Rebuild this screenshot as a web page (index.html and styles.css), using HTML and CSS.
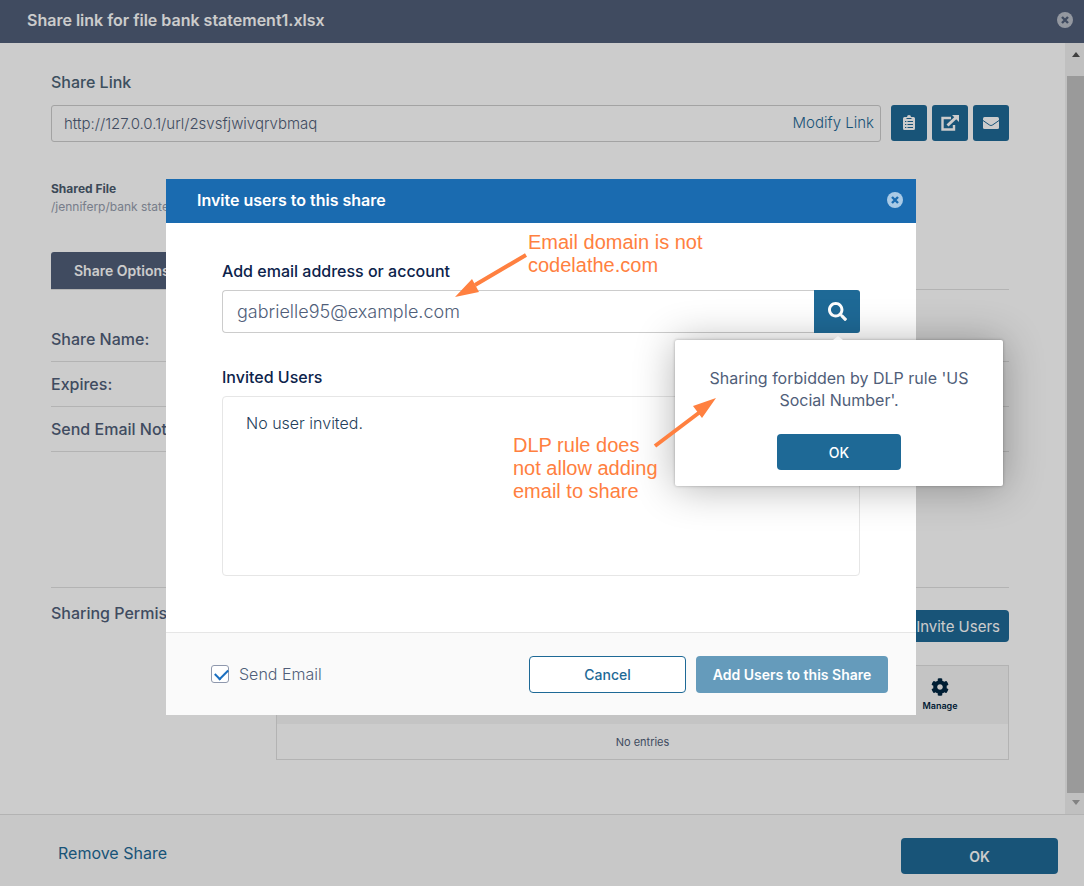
FILE: index.html
```
<!DOCTYPE html>
<html lang="en">
	<head>
		<meta charset="utf-8" />
		<meta name="viewport" content="width=device-width, initial-scale=1" />
		<title>Share link</title>
		<link rel="stylesheet" href="styles.css">
	</head>

	<body>
		<div class="page">
			<header class="page-header">
				<h1 class="title">Share link for file bank statement1.xlsx</h1>
				<button class="close" type="button">
					<svg width="16" height="16" viewBox="0 0 16 16"><circle cx="8" cy="8" r="8" fill="#b9bfc9" /><path d="M5 5l6 6M11 5l-6 6" stroke="#505e79" stroke-width="2.4" /></svg>
				</button>
			</header>

			<div class="page-body">
				<main class="content">
					<label class="heading" for="share-link">Share Link</label>
					<div class="link-row">
						<div class="link-box">
							<input class="link-input" id="share-link" type="text" value="http://127.0.0.1/url/2svsfjwivqrvbmaq" />
							<a class="link modify" href="#">Modify Link</a>
						</div>
						<button class="icon-btn" type="button">
							<svg width="12" height="16" viewBox="0 0 12 16"><path d="M1.5 2H4a2 2 0 0 1 4 0h2.500A1.500 1.500 0 0 1 12 3.500v10a1.500 1.500 0 0 1-1.500 1.500h-9A1.500 1.500 0 0 1 0 13.500v-10A1.500 1.500 0 0 1 1.500 2z" fill="#fff" /><path d="M4.500 6.500h5.500M4.500 9.500h5.500M4.500 12.500h5.500M2 6.500h1.300M2 9.500h1.300M2 12.500h1.300M3.500 3.500h5" stroke="#1e6996" stroke-width="1" /></svg>
						</button>
						<button class="icon-btn" type="button">
							<svg width="18" height="16" viewBox="0 0 18 16"><path d="M10 3H1.500v11.500H13V10" fill="none" stroke="#fff" stroke-width="2.400" /><path d="M6.500 10.500L15 2.500" stroke="#fff" stroke-width="3" /><path d="M11 0h7v7z" fill="#fff" /></svg>
						</button>
						<button class="icon-btn" type="button">
							<svg width="16" height="12" viewBox="0 0 16 12"><rect width="16" height="12" rx="1.500" fill="#fff" /><path d="M0 3.500l6.200 4.300c1.200.9 2.400.9 3.600 0L16 3.500" fill="none" stroke="#1e6996" /></svg>
						</button>
					</div>

					<div class="shared-file">
						<b class="shared-label">Shared File</b>
						<span>/jenniferp/bank statement1.xlsx</span>
					</div>

					<nav class="tabs">
						<button class="tab" type="button">Share Options</button>
					</nav>

					<div class="options">
						<div class="option">Share Name:</div>
						<div class="option">Expires:</div>
						<div class="option">Send Email Notifications:</div>
					</div>

					<section class="permissions">
						<h2 class="heading">Sharing Permissions</h2>
						<div class="permissions-list">
							<button class="btn invite" type="button">Invite Users</button>
							<table class="users">
								<thead>
									<tr>
										<td></td>
										<th class="manage">
											<svg width="18" height="18" viewBox="0 0 512 512"><path fill="#002642" d="M487.400 315.700l-42.600-24.600c4.300-23.200 4.300-47 0-70.200l42.600-24.600c4.900-2.800 7.100-8.600 5.500-14-11.100-35.600-30-67.800-54.700-94.600-3.800-4.100-10-5.100-14.800-2.300L380.800 110c-17.900-15.400-38.500-27.300-60.800-35.100V25.800c0-5.600-3.900-10.500-9.400-11.700-36.700-8.200-74.300-7.800-109.200 0-5.500 1.200-9.400 6.100-9.400 11.700V75c-22.200 7.900-42.800 19.800-60.800 35.100L88.700 85.500c-4.900-2.800-11-1.900-14.800 2.300-24.700 26.700-43.600 58.900-54.700 94.600-1.700 5.400.6 11.200 5.500 14L67.300 221c-4.300 23.200-4.300 47 0 70.200l-42.600 24.600c-4.900 2.800-7.100 8.600-5.500 14 11.100 35.600 30 67.800 54.700 94.600 3.800 4.100 10 5.100 14.800 2.300l42.600-24.600c17.900 15.400 38.500 27.300 60.800 35.100v49.200c0 5.600 3.900 10.500 9.400 11.700 36.700 8.200 74.300 7.800 109.200 0 5.500-1.200 9.400-6.100 9.400-11.700v-49.200c22.200-7.900 42.800-19.800 60.800-35.100l42.600 24.600c4.900 2.800 11 1.900 14.800-2.300 24.700-26.700 43.600-58.900 54.700-94.600 1.500-5.500-.7-11.300-5.600-14.100zM256 336c-44.100 0-80-35.900-80-80s35.900-80 80-80 80 35.900 80 80-35.900 80-80 80z" /></svg>
											Manage
										</th>
									</tr>
								</thead>
								<tbody>
									<tr>
										<td class="empty" colspan="2">No entries</td>
									</tr>
								</tbody>
							</table>
						</div>
					</section>
				</main>

				<div class="scrollbar">
					<svg class="scroll-arrow" width="8" height="5" viewBox="0 0 8 5"><path d="M4 0l4 5H0z" fill="#505050" /></svg>
					<div class="thumb"></div>
					<svg class="scroll-arrow" width="8" height="5" viewBox="0 0 8 5"><path d="M4 5l4-5H0z" fill="#a3a3a3" /></svg>
				</div>
			</div>

			<footer class="page-footer">
				<a class="link remove" href="#">Remove Share</a>
				<button class="btn wide" type="button">OK</button>
			</footer>
		</div>

		<!-- invite dialog -->
		<div class="overlay">
			<div class="modal" role="dialog">
				<header class="modal-header">
					<h2 class="title">Invite users to this share</h2>
					<button class="close" type="button">
						<svg width="16" height="16" viewBox="0 0 16 16"><circle cx="8" cy="8" r="8" fill="#a9cae6" /><path d="M5 5l6 6M11 5l-6 6" stroke="#1a6bb0" stroke-width="2.4" /></svg>
					</button>
				</header>

				<div class="modal-body">
					<label class="modal-label" for="email">Add email address or account</label>
					<div class="search">
						<input class="search-input" id="email" type="text" value="gabrielle95@example.com" />
						<button class="search-btn" type="button">
							<svg width="19" height="19" viewBox="0 0 512 512"><path fill="#fff" d="M505 442.700L405.300 343c-4.500-4.500-10.600-7-17-7H372c27.600-35.300 44-79.700 44-128C416 93.100 322.900 0 208 0S0 93.100 0 208s93.100 208 208 208c48.300 0 92.700-16.400 128-44v16.300c0 6.400 2.500 12.500 7 17l99.700 99.700c9.400 9.400 24.600 9.400 33.900 0l28.300-28.300c9.400-9.400 9.400-24.600.1-34zM208 336c-70.700 0-128-57.200-128-128 0-70.700 57.200-128 128-128 70.700 0 128 57.200 128 128 0 70.700-57.200 128-128 128z" /></svg>
						</button>
						<div class="popover">
							<p class="message">Sharing forbidden by DLP rule 'US Social Number'.</p>
							<button class="btn popover-ok" type="button">OK</button>
						</div>
					</div>

					<h3 class="modal-label">Invited Users</h3>
					<div class="invited">No user invited.</div>
				</div>

				<footer class="modal-footer">
					<input class="check" id="send-email" type="checkbox" checked />
					<label class="check-label" for="send-email">Send Email</label>
					<button class="btn wide outline" type="button">Cancel</button>
					<button class="btn add" type="button">Add Users to this Share</button>
				</footer>

				<!-- notes drawn on top of the dialog -->
				<p class="note note-email">Email domain is not<br />codelathe.com</p>
				<p class="note note-rule">DLP rule does<br />not allow adding<br />email to share</p>
				<svg class="arrows" width="750" height="536" viewBox="0 0 750 536">
					<g fill="#ff8040" stroke="#ff8040">
						<path d="M360 76l-51 30M489 267l45-34" stroke-width="4" />
						<path d="M289 118l17-18 7 13zM550 219l-23 8 9 12z" stroke="none" />
					</g>
				</svg>
			</div>
		</div>
	</body>
</html>
```

FILE: styles.css
```
* {
	box-sizing: border-box;
}

body {
	margin: 0;
	background: #fff;
	color: #505e79;
	font-family: Inter, "Liberation Sans", sans-serif;
	font-size: 16px;
	line-height: 20px;
}

h1, h2, h3, p {
	margin: 0;
}

button, input {
	font-family: inherit;
	color: inherit;
}

svg {
	display: block;
}

/* share page */
.page {
	display: flex;
	flex-direction: column;
	min-height: 100vh;
}

.page-header {
	display: flex;
	align-items: center;
	justify-content: space-between;
	height: 43px;
	padding: 0 11px 3px 27px;
	background: #505e79;
}

.title {
	color: #fff;
	font-size: 16px;
	font-weight: 600;
}

.close {
	padding: 0;
	border: 0;
	background: none;
}

.page-body {
	display: flex;
	flex: 1;
}

.content {
	flex: 1;
	padding: 29px 56px 54px 51px;
}

.heading {
	display: block;
	color: #4c6376;
	font-size: 16px;
	font-weight: 500;
}

.link-row {
	display: flex;
	gap: 5px;
	margin-top: 13px;
}

.link-box {
	display: flex;
	flex: 1;
	align-items: center;
	height: 37px;
	margin-right: 5px;
	padding: 0 6px 1px 12px;
	border: 1px solid #ccc;
	border-radius: 3px;
}

.link-input {
	flex: 1;
	padding: 0;
	border: 0;
	background: none;
	font-size: 15px;
	font-weight: 300;
}

.link {
	color: #1e6996;
	text-decoration: none;
}

.modify {
	font-size: 15px;
	font-weight: 300;
}

.icon-btn {
	display: flex;
	align-items: center;
	justify-content: center;
	width: 36px;
	height: 36px;
	padding: 0;
	border: 0;
	border-radius: 3px;
	background: #1e6996;
}

.shared-file {
	display: flex;
	flex-direction: column;
	margin-top: 38px;
	color: #959dad;
	font-size: 12px;
	line-height: 18px;
}

.shared-label {
	color: #4c5c6e;
	font-weight: 700;
}

.tabs {
	display: flex;
	margin-top: 36px;
	border-bottom: 1px solid #e0e0e0;
}

.tab {
	height: 37px;
	padding: 0 23px;
	border: 0;
	border-radius: 3px 3px 0 0;
	background: #505e79;
	color: #fff;
	font-size: 14px;
	font-weight: 600;
}

.options {
	min-height: 297px;
	padding-top: 27px;
	font-weight: 500;
}

.option {
	height: 45px;
	padding: 12px 0;
	border-bottom: 1px solid #e0e0e0;
}

.permissions {
	display: grid;
	grid-template-columns: 225px 1fr;
	padding-top: 15px;
	border-top: 1px solid #e0e0e0;
}

.permissions .heading {
	color: #505e79;
}

.permissions-list {
	display: flex;
	flex-direction: column;
	gap: 23px;
	padding-top: 7px;
}

.btn {
	height: 36px;
	border: 0;
	border-radius: 4px;
	background: #1e6996;
	color: #fff;
	font-size: 14px;
	font-weight: 500;
}

.wide {
	width: 157px;
}

.invite {
	align-self: flex-end;
	height: 32px;
	padding: 0 9px;
	font-size: 15px;
	font-weight: 400;
}

.users {
	width: 100%;
	border: 1px solid #e0e0e0;
	border-spacing: 0;
	font-size: 11px;
}

.users thead {
	height: 58px;
	background: #f5f5f5;
}

.manage {
	width: 136px;
	padding: 3px 0 0;
	color: #002642;
	font-size: 9px;
	font-weight: 600;
}

.manage svg {
	margin: 0 auto;
}

.empty {
	height: 35px;
	padding: 0;
	text-align: center;
}

.scrollbar {
	display: flex;
	flex-direction: column;
	align-items: center;
	justify-content: space-between;
	width: 19px;
	padding: 9px 0;
	background: #f1f1f1;
}

.scroll-arrow {
	margin-left: 2px;
}

.thumb {
	flex: 1;
	align-self: stretch;
	margin: 19px 0 7px 2px;
	background: #c1c1c1;
}

.page-footer {
	display: flex;
	align-items: center;
	justify-content: space-between;
	height: 72px;
	padding: 11px 26px 0 58px;
	border-top: 1px solid #e0e0e0;
	background: #fafafa;
}

.page-footer .btn {
	font-weight: 600;
}

.remove {
	padding-bottom: 7px;
}

/* dialog */
.overlay {
	position: absolute;
	inset: 0;
	padding: 179px 168px 0 166px;
	background: rgba(0, 0, 0, 0.2);
}

.modal {
	position: relative;
	background: #fff;
}

.modal-header {
	display: flex;
	align-items: center;
	justify-content: space-between;
	height: 44px;
	padding: 0 13px 2px 31px;
	background: #1a6bb0;
}

.modal-body {
	padding: 38px 56px 56px;
}

.modal-label {
	display: block;
	color: #0c234b;
	font-size: 16px;
	font-weight: 500;
}

.search {
	position: relative;
	display: flex;
	margin: 9px 0 34px;
}

.search-input {
	flex: 1;
	height: 43px;
	padding: 0 14px;
	border: 1px solid #ccc;
	border-right: 0;
	border-radius: 4px 0 0 4px;
	font-size: 18px;
	font-weight: 300;
}

.search-btn {
	display: flex;
	align-items: center;
	justify-content: center;
	width: 46px;
	padding: 0;
	border: 0;
	border-radius: 0 3px 3px 0;
	background: #1e6996;
}

.popover {
	position: absolute;
	top: 50px;
	right: -143px;
	width: 328px;
	padding: 27px 32px 16px;
	border-radius: 2px;
	background: #fff;
	box-shadow: 0 0 3px rgba(0, 0, 0, 0.3), 0 2px 40px rgba(0, 0, 0, 0.3);
	text-align: center;
}

.popover::before {
	content: "";
	position: absolute;
	top: -4px;
	left: 158px;
	border: 5px solid transparent;
	border-top: 0;
	border-bottom: 4px solid #f0f0f0;
}

.message {
	line-height: 22px;
}

.popover-ok {
	width: 124px;
	margin-top: 23px;
}

.invited {
	height: 180px;
	margin-top: 9px;
	padding: 16px 23px;
	border: 1px solid #e6e6e6;
	border-radius: 4px;
	color: #24405a;
	font-weight: 300;
}

.modal-footer {
	display: flex;
	align-items: center;
	gap: 10px;
	height: 83px;
	padding: 0 28px 0 45px;
	border-top: 1px solid #e6e6e6;
	background: #fafafa;
}

.check {
	appearance: none;
	width: 18px;
	height: 18px;
	margin: 0;
	border: 1px solid #8f98ad;
	border-radius: 3px;
	background: #fff;
}

/* tick */
.check:checked::before {
	content: "";
	display: block;
	width: 11px;
	height: 6px;
	margin: 3px 0 0 3px;
	border: solid #1a6fc0;
	border-width: 0 0 2px 2px;
	transform: rotate(-45deg);
}

.check-label {
	flex: 1;
	font-weight: 300;
}

.modal-footer .btn {
	height: 37px;
}

.outline {
	border: 1px solid #1e6996;
	background: #fff;
	color: #1e6996;
}

.add {
	width: 192px;
	background: #659bbb;
	font-weight: 600;
}

.note {
	position: absolute;
	color: #ff8040;
	font-family: "Liberation Sans", Arial, sans-serif;
	font-size: 20px;
	line-height: 23px;
}

.note-email {
	top: 52px;
	left: 362px;
}

.note-rule {
	top: 255px;
	left: 347px;
}

.arrows {
	position: absolute;
	top: 0;
	left: 0;
	pointer-events: none;
}
```
